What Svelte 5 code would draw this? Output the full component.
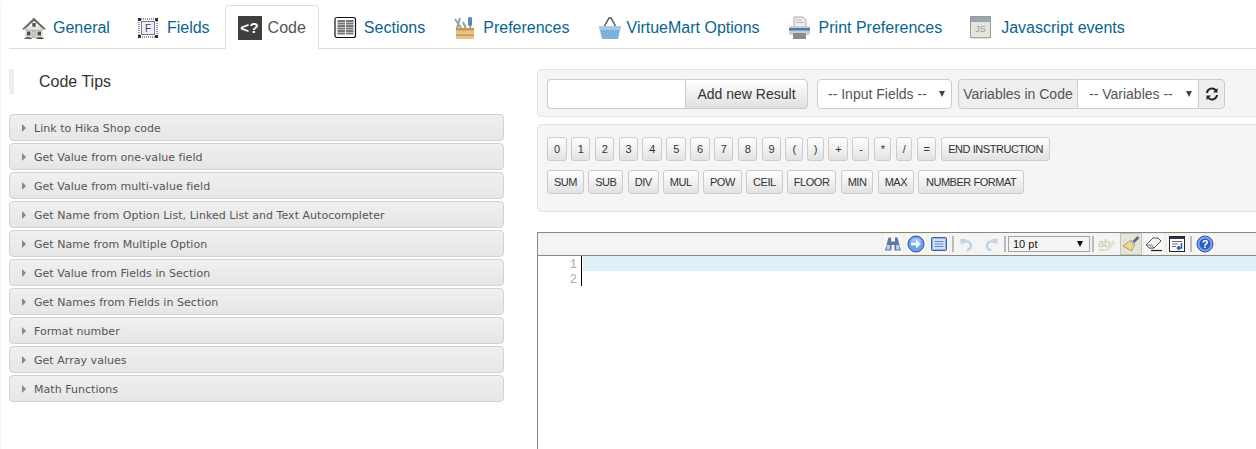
<script lang="ts">
  const tabs = [
    { label: "General", icon: "home" },
    { label: "Fields", icon: "fields" },
    { label: "Code", icon: "code", active: true },
    { label: "Sections", icon: "sections" },
    { label: "Preferences", icon: "prefs" },
    { label: "VirtueMart Options", icon: "basket" },
    { label: "Print Preferences", icon: "print" },
    { label: "Javascript events", icon: "js" },
  ];

  const tips = [
    "Link to Hika Shop code",
    "Get Value from one-value field",
    "Get Value from multi-value field",
    "Get Name from Option List, Linked List and Text Autocompleter",
    "Get Name from Multiple Option",
    "Get Value from Fields in Section",
    "Get Names from Fields in Section",
    "Format number",
    "Get Array values",
    "Math Functions",
  ];

  const symbols = ["0", "1", "2", "3", "4", "5", "6", "7", "8", "9", "(", ")", "+", "-", "*", "/", "=", "END INSTRUCTION"];
  const functions = ["SUM", "SUB", "DIV", "MUL", "POW", "CEIL", "FLOOR", "MIN", "MAX", "NUMBER FORMAT"];
</script>

<div class="page">
  <ul class="tabs">
    {#each tabs as tab}
      <li class="tab {tab.icon}" class:active={tab.active}>
        {#if tab.icon === "home"}
          <svg width="24" height="24" viewBox="0 0 24 24">
            <path d="M4 11h16v10H4z" fill="#f1f0ea" stroke="#999" stroke-width=".5" />
            <path d="M.5 13 12 2l11.500 11-1.300.5L12 4.800 1.800 13.500z" fill="#6a6c64" stroke="#444" stroke-width=".4" />
            <rect x="10.300" y="7" width="3.400" height="3.600" fill="#4a5540" />
            <path d="M3.500 13.500h17v1h-17z" fill="#a5a59c" />
            <rect x="5" y="15.500" width="3.500" height="4" fill="#4c4f4a" />
            <rect x="15.500" y="15.500" width="3.500" height="4" fill="#4c4f4a" />
            <rect x="10" y="15" width="4" height="6.500" fill="#cfcfc8" stroke="#888" stroke-width=".5" />
            <path d="M2 22.800c0-2 6.500-2 7.500-.8v1zM14.500 22c1-1.200 7.500-1.200 7.500.8v.2h-7.500z" fill="#36582a" />
          </svg>
        {:else if tab.icon === "fields"}
          <svg width="22" height="22" viewBox="0 0 22 22">
            <rect x="2" y="2" width="18" height="18" fill="#fff" stroke="#333" stroke-dasharray="1 1" />
            <rect x="1" y="1" width="3" height="3" fill="#333" /><rect x="18" y="1" width="3" height="3" fill="#333" />
            <rect x="1" y="18" width="3" height="3" fill="#333" /><rect x="18" y="18" width="3" height="3" fill="#333" />
            <rect x="4.500" y="4.500" width="13" height="13" fill="#f0f0f6" stroke="#77779a" />
            <text x="11" y="15" class="fieldLetter">F</text>
          </svg>
        {:else if tab.icon === "code"}
          <span class="codeIcon">&lt;?</span>
        {:else if tab.icon === "sections"}
          <svg width="23" height="23" viewBox="0 0 23 23">
            <rect x="1" y="1.500" width="20.500" height="20" rx="2" fill="#fff" stroke="#111" stroke-width="1.200" />
            <path d="M3.500 5h7.500M3.500 7.500h7.500M3.500 10h7.500M3.500 12.500h7.500M3.500 15h7.500M3.500 17.500h7.500M12 5h7.500M12 7.500h7.500M12 10h7.500M12 12.500h7.500M12 15h7.500M12 17.500h7.500" stroke="#777" stroke-width="1.800" />
          </svg>
        {:else if tab.icon === "prefs"}
          <svg width="23" height="24" viewBox="0 0 23 24">
            <path d="M2 3l6 9M7 2 4 12M10 6l3 7" stroke="#9a9fa2" stroke-width="2" />
            <rect x="15" y="1" width="4" height="9" rx="1.500" fill="#5a86c0" />
            <path d="M16.500 9h1.500v5h-1.500z" fill="#888" />
            <path d="M3 12h18v11H3z" fill="#e8c48a" />
            <path d="M3 12h18v2.500H3zM3 18.500h18v1.500H3z" fill="#c8964c" />
          </svg>
        {:else if tab.icon === "basket"}
          <svg width="24" height="24" viewBox="0 0 24 24">
            <path d="M6 11 11 2h2l5 9" fill="none" stroke="#555" stroke-width="1.500" />
            <path d="M1 10h22l-3 13H4z" fill="#7fb0d8" />
            <path d="M1 10h22l-1 4H2z" fill="#a5c9e6" />
          </svg>
        {:else if tab.icon === "print"}
          <svg width="23" height="24" viewBox="0 0 23 24">
            <path d="M6 1h9l3 3v7H6z" fill="#eee" stroke="#aaa" />
            <path d="M8 4h6M8 6.500h8" stroke="#bbb" />
            <rect x="1" y="10" width="21" height="9" rx="2" fill="#c9ccd2" />
            <rect x="1" y="12" width="21" height="2.500" fill="#4a78b0" />
            <rect x="5" y="17" width="13" height="6" fill="#888c92" />
          </svg>
        {:else}
          <svg width="21" height="23" viewBox="0 0 21 23">
            <rect x=".5" y=".5" width="20" height="21" fill="#e6e5db" stroke="#9a9a9a" />
            <rect x="1" y="1" width="19" height="5" fill="#9aa5ae" />
            <text x="10.500" y="16" class="jsLetter">JS</text>
            <path d="M2 22h17" stroke="#bbb" />
          </svg>
        {/if}
        <span>{tab.label}</span>
      </li>
    {/each}
  </ul>

  <div class="content">
    <div class="left">
      <h3 class="title">Code Tips</h3>
      <div class="accordion">
        {#each tips as tip}
          <div class="tip"><span class="arrow"></span>{tip}</div>
        {/each}
      </div>
    </div>

    <div class="right">
      <div class="well top">
        <div class="group">
          <input class="resultInput" type="text" />
          <button class="btn addBtn">Add new Result</button>
        </div>
        <div class="select inputFields">-- Input Fields --<span class="caret"></span></div>
        <div class="group">
          <span class="addon">Variables in Code</span>
          <div class="select variables">-- Variables --<span class="caret"></span></div>
          <button class="btn refresh" aria-label="Refresh">
            <svg width="14" height="14" viewBox="0 0 14 14">
              <path d="M2 6a5 5 0 0 1 9-2.500M12 8a5 5 0 0 1-9 2.500" fill="none" stroke="#222" stroke-width="2" />
              <path d="M12.500 1v4.500H8zM1.500 13V8.500H6z" fill="#222" />
            </svg>
          </button>
        </div>
      </div>

      <div class="well keys">
        <div class="keyRow">
          {#each symbols as key}<button class="key" class:long={key.length > 10}>{key}</button>{/each}
        </div>
        <div class="keyRow">
          {#each functions as key}<button class="key" class:long={key.length > 10}>{key}</button>{/each}
        </div>
      </div>

      <div class="editor">
        <div class="toolbar">
          <span class="tool" title="Search">
            <svg width="18" height="16" viewBox="0 0 18 16"><path d="M4.500 1.500h2.500v4h4v-4h2.500L17 14.500h-6.500V9h-3v5.500H1z" fill="#5b78a8" /><path d="M2.500 9h3.500v4.500H2.500zM12 9h3.500v4.500H12z" fill="#b9cdea" /></svg>
          </span>
          <span class="tool" title="Go to">
            <svg width="18" height="18" viewBox="0 0 18 18"><circle cx="9" cy="9" r="8" fill="#6ea0e6" stroke="#2c50b0" /><path d="M3.500 6.500a6 6 0 0 1 11 0z" fill="#a5c6f2" /><path d="M4 7.500h5V4.500l5 4.500-5 4.500v-3H4z" fill="#f4f7fd" /></svg>
          </span>
          <span class="tool" title="Fullscreen">
            <svg width="16" height="16" viewBox="0 0 16 16"><rect x=".5" y="1.500" width="15" height="13" rx="1" fill="#8fb2e8" stroke="#3a5fa4" /><rect x="2" y="3" width="12" height="10" fill="#d5e3f8" /><path d="M3.500 5.500h9M3.500 8h9M3.500 10.500h9" stroke="#5d84c4" /></svg>
          </span>
          <span class="sep"></span>
          <span class="tool plain" title="Undo">
            <svg width="16" height="16" viewBox="0 0 16 16"><path d="M4 7a4.500 4.500 0 0 1 8 3c0 2-1.500 3.500-4 4.500" fill="none" stroke="#c3d3e8" stroke-width="2.500" /><path d="M1 3h6.500L2 9z" fill="#c3d3e8" /></svg>
          </span>
          <span class="tool plain" title="Redo">
            <svg width="16" height="16" viewBox="0 0 16 16"><path d="M12 7a4.500 4.500 0 0 0-8 3c0 2 1.500 3.500 4 4.500" fill="none" stroke="#c3d3e8" stroke-width="2.500" /><path d="M15 3H8.500L14 9z" fill="#c3d3e8" /></svg>
          </span>
          <span class="sep"></span>
          <div class="sizeSelect">10 pt<span class="caret dark"></span></div>
          <span class="sep"></span>
          <span class="tool plain" title="Highlight">
            <svg width="18" height="16" viewBox="0 0 18 16"><text x="0" y="11" class="abText">ab</text><path d="M10 13l6-8" stroke="#e5e2d0" stroke-width="3" /><path d="M1 14h9" stroke="#cfc98a" /></svg>
          </span>
          <span class="tool on" title="Reset">
            <svg width="18" height="18" viewBox="0 0 18 18"><path d="M9 5l4 4-3.500 7-8.500-5z" fill="#e8dc8c" stroke="#8c8450" stroke-width=".7" /><path d="M10.500 6l5-5L17.500 3l-5 5z" fill="#6f5f9c" /><path d="M9 5l4 4-1.500 1.500-4-4z" fill="#bbb" /></svg>
          </span>
          <span class="tool" title="Erase">
            <svg width="18" height="16" viewBox="0 0 18 16"><path d="M1 9l7-7h5l3 3-7 7H4z" fill="#f4f4f4" stroke="#555" /><path d="M1 9l3 3h5l-2-3z" fill="#c9d3e2" stroke="#555" stroke-width=".6" /><path d="M6 14.500h11" stroke="#222" stroke-width="1.200" /></svg>
          </span>
          <span class="tool" title="Word wrap">
            <svg width="16" height="16" viewBox="0 0 16 16"><rect x=".5" y=".5" width="15" height="15" fill="#fff" stroke="#223" /><rect x="1" y="1" width="14" height="2" fill="#334" /><path d="M3 5.500h10M3 8h6M3 10.500h4" stroke="#667" /><path d="M12.500 7v5H8.500m2-2-2 2 2 2" fill="none" stroke="#1f55b0" stroke-width="1.500" /></svg>
          </span>
          <span class="sep"></span>
          <span class="tool" title="Help">
            <svg width="18" height="18" viewBox="0 0 18 18"><circle cx="9" cy="9" r="8" fill="#7aa8ea" stroke="#2c50b0" /><circle cx="9" cy="9" r="5.500" fill="#2c5cc0" /><text x="9" y="13" class="helpText">?</text></svg>
          </span>
        </div>
        <div class="editArea">
          <div class="gutter"><div>1</div><div>2</div></div>
          <div class="lines">
            <div class="line current"></div>
            <div class="line"></div>
          </div>
        </div>
      </div>
    </div>
  </div>
</div>

<style>
  :global(body) {
    margin: 0;
    background: #fff;
    overflow: hidden;
    font-family: "Liberation Sans", Arial, sans-serif;
    color: #333;
  }

  .page {
    height: 449px;
    overflow: hidden;
    border-top-left-radius: 4px;
    box-shadow: inset 1px 0 #f4f4f4;
  }

  .tabs {
    display: flex;
    gap: 2px;
    list-style: none;
    margin: 0 0 0 9px;
    padding: 5px 0 0;
    height: 43px;
    border-bottom: 1px solid #ddd;
  }

  .tab {
    display: flex;
    align-items: center;
    gap: 7px;
    height: 44px;
    padding: 0 12px;
    box-sizing: border-box;
    border: 1px solid transparent;
    border-bottom: none;
    font-size: 16px;
    color: #0a6491;
    white-space: nowrap;
  }

  .tab.home {
    padding-right: 11px;
  }

  .tab.fields,
  .tab.print {
    gap: 8px;
  }

  .tab.js {
    gap: 10px;
  }

  .tab.code {
    gap: 6px;
  }

  .tab.basket {
    gap: 5px;
  }

  .tab.active {
    background: #fff;
    border-color: #ddd;
    border-radius: 4px 4px 0 0;
    color: #555;
  }

  .tab svg {
    flex: none;
  }

  .fieldLetter {
    font: 10px "Liberation Sans", sans-serif;
    fill: #44446a;
    text-anchor: middle;
  }

  .jsLetter {
    font: 9px "Liberation Sans", sans-serif;
    fill: #999;
    text-anchor: middle;
  }

  .codeIcon {
    width: 24px;
    height: 24px;
    background: #3f3f3f;
    color: #fff;
    font: bold 15px/24px "Liberation Sans", sans-serif;
    text-align: center;
    letter-spacing: 0.5px;
  }

  .content {
    display: flex;
    gap: 33px;
    padding: 20px 0 0 9px;
  }

  .left {
    width: 495px;
    flex: none;
  }

  .right {
    width: 740px;
    flex: none;
  }

  .title {
    margin: 0 0 20px;
    height: 25px;
    border-left: 5px solid #eee;
    padding-left: 25px;
    font-size: 16px;
    font-weight: normal;
    line-height: 25px;
    color: #333;
  }

  .accordion {
    display: flex;
    flex-direction: column;
    gap: 2px;
  }

  .tip {
    display: flex;
    align-items: center;
    height: 27px;
    box-sizing: border-box;
    padding: 1px 0 0 12px;
    border: 1px solid #d3d3d3;
    border-radius: 4px;
    background: linear-gradient(#f0f0f0, #e6e6e6);
    font: 11px "DejaVu Sans", Verdana, sans-serif;
    letter-spacing: 0.04px;
    color: #555;
  }

  .arrow {
    width: 0;
    height: 0;
    margin-right: 8px;
    border-left: 4px solid #888;
    border-top: 4px solid transparent;
    border-bottom: 4px solid transparent;
  }

  .well {
    background: #f5f5f5;
    border: 1px solid #e3e3e3;
    border-radius: 4px;
    box-sizing: border-box;
    padding: 9px;
  }

  .top {
    display: flex;
    gap: 9px;
    height: 48px;
    margin-bottom: 7px;
  }

  .keys {
    height: 88px;
    padding-top: 12px;
    margin-bottom: 20px;
  }

  .group {
    display: flex;
    height: 30px;
  }

  .top .group:last-child {
    margin-left: -3px;
  }

  .resultInput {
    width: 138px;
    height: 30px;
    box-sizing: border-box;
    border: 1px solid #ccc;
    border-right: none;
    border-radius: 4px 0 0 4px;
    background: #fff;
    padding: 0;
  }

  .btn {
    height: 30px;
    box-sizing: border-box;
    border: 1px solid #ccc;
    background: linear-gradient(#fff, #e0e0e0);
    color: #333;
    font: 14px "Liberation Sans", sans-serif;
    padding: 0;
  }

  .addBtn {
    width: 123px;
    border-radius: 0 4px 4px 0;
  }

  .select {
    position: relative;
    box-sizing: border-box;
    height: 30px;
    border: 1px solid #ccc;
    background: #fff;
    font-size: 14px;
    line-height: 28px;
    color: #555;
    padding-left: 10px;
  }

  .inputFields {
    width: 135px;
    border-radius: 4px;
  }

  .variables {
    width: 120px;
    padding-left: 11px;
    border-left: none;
    border-right: none;
  }

  .caret {
    position: absolute;
    right: 6px;
    top: 11px;
    width: 0;
    height: 0;
    border-left: 3.500px solid transparent;
    border-right: 3.500px solid transparent;
    border-top: 6px solid #444;
  }

  .addon {
    width: 120px;
    box-sizing: border-box;
    border: 1px solid #ccc;
    border-radius: 4px 0 0 4px;
    background: #eee;
    font-size: 14px;
    line-height: 28px;
    text-align: center;
    color: #555;
    white-space: nowrap;
  }

  .refresh {
    width: 27px;
    display: flex;
    align-items: center;
    justify-content: center;
    background: #eee;
    border-radius: 0 4px 4px 0;
  }

  .keyRow {
    display: flex;
    gap: 4.300px;
    margin-bottom: 9px;
  }

  .key {
    height: 24px;
    padding: 0 5.950px;
    box-sizing: border-box;
    border: 1px solid #ccc;
    border-radius: 3px;
    background: linear-gradient(#fff, #e2e2e2);
    font: 11px "Liberation Sans", sans-serif;
    letter-spacing: -0.45px;
    color: #333;
    white-space: nowrap;
  }

  .key.long {
    padding: 0 6.500px;
  }

  .editor {
    height: 240px;
    border: 1px solid #888;
    border-bottom: none;
    border-right: none;
  }

  .toolbar {
    display: flex;
    align-items: center;
    height: 22px;
    padding-left: 344px;
    border-bottom: 1px solid #888;
    background: #f4f4f4;
  }

  .tool {
    display: flex;
    align-items: center;
    justify-content: center;
    width: 20px;
    height: 20px;
    margin-right: 1px;
    border: 1px solid #f2efe0;
    background: #f7f7f5;
    flex: none;
  }

  .tool.plain {
    margin-right: 1.500px;
    border-color: transparent;
    background: transparent;
  }

  .tool.on {
    border-color: #c8c6b8;
    background: #e6e4d8;
  }

  .sep {
    width: 2px;
    height: 16px;
    margin: 0 2px 0 1px;
    background: #bbb;
    flex: none;
  }

  .sizeSelect {
    position: relative;
    width: 82px;
    height: 16px;
    margin-right: 1px;
    box-sizing: border-box;
    border: 1px solid #a5a5a0;
    padding-left: 4px;
    font-size: 11px;
    line-height: 14px;
    color: #111;
    flex: none;
  }

  .caret.dark {
    top: 4px;
    border-top-color: #111;
  }

  .abText {
    font: 11px "Liberation Sans", sans-serif;
    fill: #c9c5a5;
  }

  .helpText {
    font: bold 11px "Liberation Sans", sans-serif;
    fill: #fff;
    text-anchor: middle;
  }

  .editArea {
    display: flex;
  }

  .gutter {
    width: 43px;
    flex: none;
    text-align: right;
    font: 12px/15px "Liberation Mono", monospace;
    color: #aaa;
    padding: 2px 4px 0 0;
    box-sizing: border-box;
  }

  .lines {
    flex: 1;
  }

  .line {
    height: 15px;
    border-left: 1px solid #000;
  }

  .line.current {
    background: linear-gradient(90deg, #fff 1px, #e0f0f7 1px);
  }
</style>
